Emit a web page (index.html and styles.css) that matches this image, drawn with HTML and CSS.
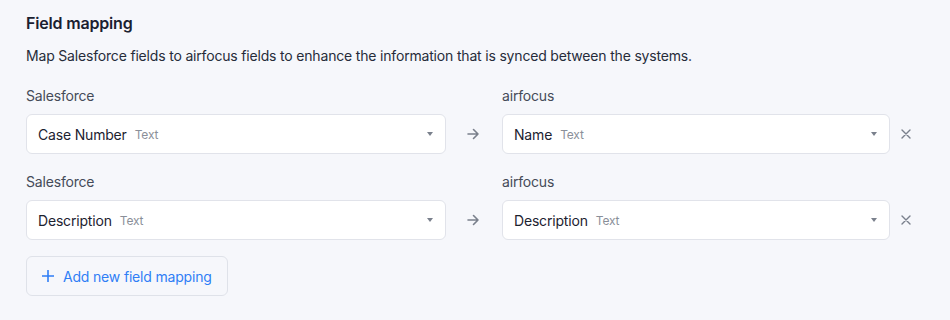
FILE: index.html
```html
<!DOCTYPE html>
<html>
<head>
<meta charset="utf-8">
<link rel="stylesheet" href="styles.css">
</head>
<body>
<div class="page">
  <h2 class="title">Field mapping</h2>
  <p class="desc">Map Salesforce fields to airfocus fields to enhance the information that is synced between the systems.</p>

  <div class="mapping">
    <div class="label">Salesforce</div>
    <div></div>
    <div class="label">airfocus</div>
    <div></div>

    <div class="select"><span class="name">Case Number</span><span class="type">Text</span><span class="caret"></span></div>
    <div class="arrow"><svg width="14" height="14" viewBox="0 0 14 14"><path d="M2 7h10M7.5 2.5L12 7l-4.5 4.5" fill="none" stroke="#7a808c" stroke-width="1.6" stroke-linecap="round" stroke-linejoin="round"/></svg></div>
    <div class="select"><span class="name">Name</span><span class="type">Text</span><span class="caret"></span></div>
    <div class="remove"><svg width="10" height="10" viewBox="0 0 10 10"><path d="M1 1l8 8M9 1l-8 8" stroke="#7a808c" stroke-width="1.4" stroke-linecap="round"/></svg></div>
  </div>

  <div class="mapping">
    <div class="label">Salesforce</div>
    <div></div>
    <div class="label">airfocus</div>
    <div></div>

    <div class="select"><span class="name">Description</span><span class="type">Text</span><span class="caret"></span></div>
    <div class="arrow"><svg width="14" height="14" viewBox="0 0 14 14"><path d="M2 7h10M7.5 2.5L12 7l-4.5 4.5" fill="none" stroke="#7a808c" stroke-width="1.6" stroke-linecap="round" stroke-linejoin="round"/></svg></div>
    <div class="select"><span class="name">Description</span><span class="type">Text</span><span class="caret"></span></div>
    <div class="remove"><svg width="10" height="10" viewBox="0 0 10 10"><path d="M1 1l8 8M9 1l-8 8" stroke="#7a808c" stroke-width="1.4" stroke-linecap="round"/></svg></div>
  </div>

  <button class="add"><svg width="12" height="12" viewBox="0 0 12 12"><path d="M6 0.5v11M0.5 6h11" stroke="#2f7ef6" stroke-width="1.6" stroke-linecap="round"/></svg><span>Add new field mapping</span></button>
</div>
</body>
</html>
```
FILE: styles.css
```css
* { box-sizing: border-box; }
html, body {
  margin: 0;
  background: #f6f7fb;
  font-family: Inter, "Noto Sans", sans-serif;
  color: #1c2230;
  letter-spacing: -0.18px;
}
.page {
  padding: 13px 26px 0 26px;
}
.title {
  margin: 0;
  font-size: 16px;
  line-height: 20px;
  font-weight: 600;
  color: #1a2030;
}
.desc {
  margin: 13px 0 0 0;
  font-size: 14px;
  line-height: 20px;
  color: #262c3a;
}
.mapping {
  display: grid;
  grid-template-columns: 420px 56px 388px 30px;
  row-gap: 8px;
  margin-top: 18px;
}
.mapping:first-of-type { margin-top: 20px; }
.label {
  font-size: 14px;
  line-height: 20px;
  color: #454b58;
}
.select {
  display: flex;
  align-items: center;
  height: 40px;
  background: #fff;
  border: 1px solid #e1e3ea;
  border-radius: 6px;
  padding: 0 12px 0 11px;
  font-size: 14px;
}
.name { color: #1c2230; }
.type {
  margin-left: 8px;
  font-size: 12px;
  color: #8a8f99;
}
.caret {
  margin-left: auto;
  width: 0; height: 0;
  border-left: 3.5px solid transparent;
  border-right: 3.5px solid transparent;
  border-top: 4px solid #7a808c;
}
.arrow, .remove {
  display: flex;
  align-items: center;
  justify-content: center;
}
.arrow { padding-right: 2px; }
.remove { justify-content: flex-start; padding-left: 11px; }
.add {
  margin-top: 16px;
  display: inline-flex;
  align-items: center;
  gap: 9px;
  height: 40px;
  padding: 0 15px 0 15px;
  background: transparent;
  border: 1px solid #dfe2e9;
  border-radius: 6px;
  font-family: Inter, "Noto Sans", sans-serif;
  letter-spacing: -0.18px;
  font-size: 14px;
  color: #2f7ef6;
}
```
